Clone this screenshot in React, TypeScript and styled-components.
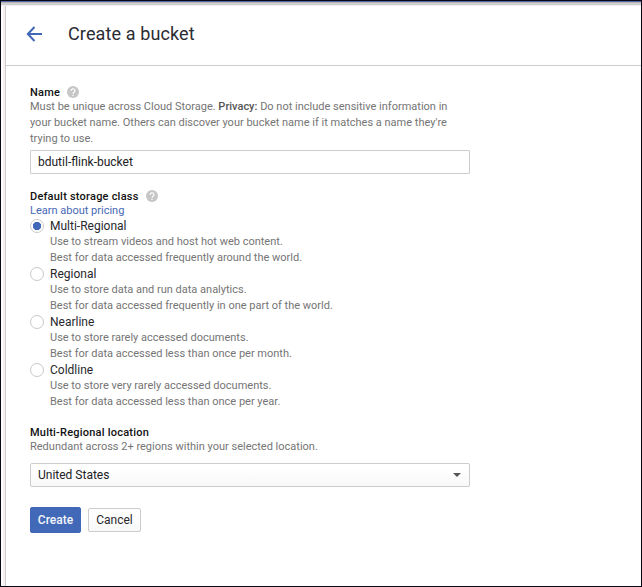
import React, { useState } from "react";
import styled, { createGlobalStyle } from "styled-components";

const GlobalStyle = createGlobalStyle`
  * { box-sizing: border-box; }
  body { margin: 0; background: #fff; font-family: Roboto, "Liberation Sans", sans-serif; }
`;

const Frame = styled.div`
  width: 642px;
  height: 587px;
  display: flex;
  flex-direction: column;
  border: 1px solid #0a0814;
  background: #fff;
  overflow: hidden;
`;

const TopShade = styled.div`
  flex: none;
  height: 5px;
  background: linear-gradient(#5368a8 0 1px, #b5b5b8 1px 2px, #cfcfcf 2px 4px, #ededed 4px);
`;

const Body = styled.div`
  flex: 1;
  display: flex;
`;

const Rail = styled.div`
  width: 5px;
  border-right: 1px solid #ccc;
  background: linear-gradient(90deg, #fff 0 2px, #f6f2f3 2px);
`;

const Page = styled.main`
  flex: 1;
`;

const Header = styled.header`
  height: 60px;
  display: flex;
  align-items: center;
  gap: 25px;
  padding: 0 0 4px 20px;
  border-bottom: 1px solid #ccc;
`;

const BackButton = styled.button`
  display: flex;
  padding: 0;
  border: 0;
  background: none;
`;

const Title = styled.h1`
  margin: 0;
  font-size: 18px;
  line-height: 24px;
  font-weight: 400;
  letter-spacing: 0.12px;
  color: #2b2b33;
`;

const Form = styled.form`
  width: 464px;
  padding: 19px 0 0 24px;
`;

const Section = styled.section<{ $gap: number }>`
  margin-bottom: ${(p) => p.$gap}px;
`;

const Label = styled.div<{ $below?: number }>`
  display: flex;
  align-items: center;
  gap: 7px;
  height: 14px;
  margin-bottom: ${(p) => p.$below ?? 0}px;
  font-size: 11px;
  font-weight: 500;
  line-height: 14px;
  letter-spacing: 0.22px;
  color: #111;
  span { padding-top: 2px; }
`;

const Hint = styled.p`
  margin: 0;
  font-size: 11px;
  line-height: 16px;
  color: #757575;
  white-space: nowrap;
  b { font-weight: 500; color: #555; }
`;

const Link = styled.a`
  display: block;
  font-size: 11px;
  line-height: 14px;
  color: #4667b4;
  text-decoration: none;
`;

const TextField = styled.input`
  display: block;
  width: 440px;
  height: 24px;
  margin-top: 3px;
  padding: 0 7px;
  border: 1px solid #ccc;
  border-radius: 1px;
  outline: 0;
  font: 400 12px Roboto, sans-serif;
  color: #202024;
`;

const Option = styled.label`
  display: grid;
  grid-template-columns: 14px 1fr;
  column-gap: 6px;
  height: 48px;
`;

const Radio = styled.span<{ $on: boolean }>`
  width: 14px;
  height: 14px;
  margin-top: 1px;
  border: 1px solid #c8c8c8;
  border-radius: 50%;
  background: ${(p) => (p.$on ? "radial-gradient(circle, #4067b8 3.8px, #fff 4.5px)" : "#fff")};
`;

const OptionName = styled.div`
  font-size: 12px;
  line-height: 16px;
  color: #28282c;
`;

const Select = styled.div`
  width: 440px;
  height: 24px;
  margin-top: 8px;
  padding: 0 8px 0 7px;
  display: flex;
  align-items: center;
  justify-content: space-between;
  border: 1px solid #ccc;
  border-radius: 2px;
  background: linear-gradient(#fff 20%, #f8f8f8);
  font-size: 12px;
  color: #202024;
`;

const Actions = styled.div`
  display: flex;
  align-items: center;
  gap: 7px;
`;

const Button = styled.button<{ $primary?: boolean }>`
  width: ${(p) => (p.$primary ? 51 : 53)}px;
  height: ${(p) => (p.$primary ? 26 : 24)}px;
  padding: 0;
  border: 1px solid ${(p) => (p.$primary ? "#4067b8" : "#ccc")};
  border-radius: 2px;
  background: ${(p) => (p.$primary ? "#4268b8" : "linear-gradient(#fff 20%, #f8f8f8)")};
  color: ${(p) => (p.$primary ? "#f4f6fa" : "#28282c")};
  font: ${(p) => (p.$primary ? 500 : 400)} 12px Roboto, sans-serif;
`;

const Help = () => (
  <svg width="12" height="12" viewBox="0 0 12 12">
    <circle cx="6" cy="6" r="6" fill="#c6c6c6" />
    <path d="M4.1 4.8a1.9 1.9 0 1 1 2.9 1.5c-.7.5-1 .8-1 1.4M6 8.8v1.1" fill="none" stroke="#fff" strokeWidth="1.2" />
  </svg>
);

const classes = [
  ["Multi-Regional", "Use to stream videos and host hot web content.", "Best for data accessed frequently around the world."],
  ["Regional", "Use to store data and run data analytics.", "Best for data accessed frequently in one part of the world."],
  ["Nearline", "Use to store rarely accessed documents.", "Best for data accessed less than once per month."],
  ["Coldline", "Use to store very rarely accessed documents.", "Best for data accessed less than once per year."],
];

export default function App() {
  const [selected, setSelected] = useState("Multi-Regional");
  const [name, setName] = useState("bdutil-flink-bucket");
  return (
    <Frame>
      <GlobalStyle />
      <TopShade />
      <Body>
        <Rail />
        <Page>
          <Header>
            <BackButton aria-label="Back">
              <svg width="17" height="16" viewBox="0 0 17 16" fill="none" stroke="#4268b8" strokeWidth="2">
                <path d="M16 8H2M8.5 1L1.8 8l6.7 7" />
              </svg>
            </BackButton>
            <Title>Create a bucket</Title>
          </Header>
          <Form onSubmit={(e) => e.preventDefault()}>
            <Section $gap={15}>
              <Label><span>Name</span> <Help /></Label>
              <Hint>
                Must be unique across Cloud Storage. <b>Privacy:</b> Do not include sensitive information in<br />
                your bucket name. Others can discover your bucket name if it matches a name they're<br />
                trying to use.
              </Hint>
              <TextField value={name} onChange={(e) => setName(e.target.value)} spellCheck={false} />
            </Section>
            <Section $gap={15}>
              <Label $below={1}><span>Default storage class</span> <Help /></Label>
              <Link>Learn about pricing</Link>
              {classes.map(([title, use, best]) => (
                <Option key={title} onClick={() => setSelected(title)}>
                  <Radio $on={selected === title} />
                  <div>
                    <OptionName>{title}</OptionName>
                    <Hint>{use}</Hint>
                    <Hint>{best}</Hint>
                  </div>
                </Option>
              ))}
            </Section>
            <Section $gap={20}>
              <Label><span>Multi-Regional location</span></Label>
              <Hint>Redundant across 2+ regions within your selected location.</Hint>
              <Select>
                United States
                <svg width="8" height="4" viewBox="0 0 8 4"><path d="M0 0h8L4 4z" fill="#555" /></svg>
              </Select>
            </Section>
            <Actions>
              <Button $primary>Create</Button>
              <Button>Cancel</Button>
            </Actions>
          </Form>
        </Page>
      </Body>
    </Frame>
  );
}
